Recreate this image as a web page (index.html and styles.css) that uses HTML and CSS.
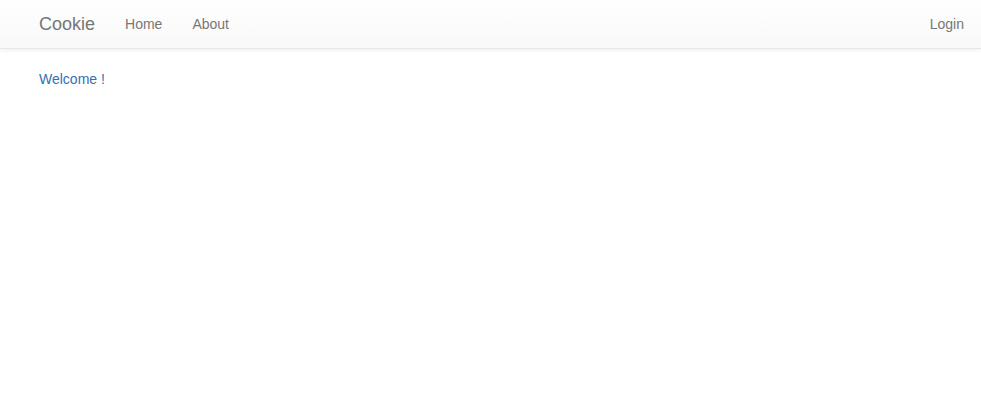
FILE: index.html
```html
<!DOCTYPE html>
<html>
<head>
<meta charset="utf-8">
<link rel="stylesheet" href="styles.css">
</head>
<body>
<nav class="navbar">
  <div class="nav-left">
    <a class="brand" href="#">Cookie</a>
    <a class="nav-link" href="#">Home</a>
    <a class="nav-link" href="#">About</a>
  </div>
  <a class="nav-link" href="#">Login</a>
</nav>
<main class="content">
  <a class="welcome" href="#">Welcome !</a>
</main>
</body>
</html>
```
FILE: styles.css
```css
html, body {
  margin: 0;
  padding: 0;
  background: #fff;
  font-family: "Liberation Sans", Arial, sans-serif;
  font-size: 14px;
  line-height: 20px;
  color: #333;
}
.navbar {
  height: 48px;
  display: flex;
  justify-content: space-between;
  align-items: center;
  padding: 0 2px 0 24px;
  background: linear-gradient(to bottom, #ffffff 0%, #f8f8f8 100%);
  border-bottom: 1px solid #e7e7e7;
  box-shadow: inset 0 1px 0 rgba(255,255,255,.15), 0 1px 5px rgba(0,0,0,.075);
}
.nav-left {
  display: flex;
  align-items: center;
}
.brand {
  font-size: 18px;
  line-height: 20px;
  padding: 14px 15px;
  color: #777;
  text-decoration: none;
}
.nav-link {
  padding: 14px 15px;
  color: #777;
  text-decoration: none;
}
.content {
  padding: 20px 39px;
}
.welcome {
  color: #3370b6;
  text-decoration: none;
}
```
